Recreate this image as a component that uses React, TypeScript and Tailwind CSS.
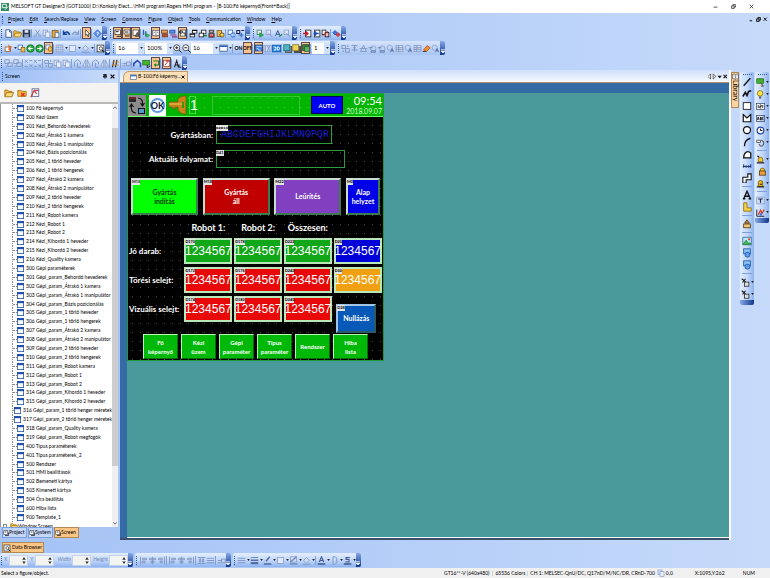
import type { ReactNode } from "react";

const BLUE = "#2563c9";
const GREY = "#8499c2";

const line = (d: string, c = "#1c2430", w = 1.3, fill = "none") => (
  <path d={d} stroke={c} strokeWidth={w} fill={fill} />
);
const box = (x: number, y: number, w: number, h: number, fill: string, stroke = "none") => (
  <rect x={x} y={y} width={w} height={h} fill={fill} stroke={stroke} />
);

const ICONS: Record<string, ReactNode> = {
  new: <>{line("M2.5 1h5l2.500 2.500v7.500h-7.500z", "#3b5d96", 1.200, "#fff")}{line("M7.500 1v3h2.500", "#3b5d96")}</>,
  open: <>{line("M1 10V2.500h3.500l1 1.500h4v1.500", "#a06d10", 1, "#f2c14b")}{line("M1 10.500l2-5h8.500l-2 5z", "#a06d10", 1, "#ffd97a")}</>,
  save: <>{box(1.5, 1.5, 9, 9, "#2c3a52", "#18202e")}{box(3.5, 1.5, 5, 3.5, "#dfe6f2")}{box(3, 7, 6, 4, "#8fa3c4")}</>,
  cut: <>{line("M3 1l5 7M9 1L4 8", GREY)}<circle cx="3" cy="9.500" r="1.500" fill="none" stroke={GREY} /><circle cx="9" cy="9.500" r="1.500" fill="none" stroke={GREY} /></>,
  copy: <>{box(1.5, 1.5, 6, 7, "#dbe6fa", GREY)}{box(4.5, 4, 6, 7, "#e8effc", GREY)}</>,
  paste: <>{box(1.5, 2, 8, 9, "#e2a83a", "#8a6013")}{box(3.5, 1, 4, 2, "#6c7687")}{box(5.5, 5, 5, 6, "#fff", "#45608f")}</>,
  undo: line("M2 2v5h5M2 7c2-4 7-4 8 1", "#17479c", 2),
  redo: line("M10 2v5H5M10 7C8 3 3 3 2 8", GREY, 1.600),
  pointer: line("M4 1v9l2-2 1.500 3.500 1.500-.7L7.500 7.500H10z", "#222", 1, "#fff"),
  help: <>{line("M6 1l5 5-5 5-5-5z", "#2b62c4", 1, "#5e95ee")}{line("M5 4.500h2v2H6v2", "#fff", 1)}</>,
  scrA: <>{box(1.5, 1.5, 8, 7, "#fff", "#222")}{line("M4 11h7V5M3 4h4", "#222", 1.500)}</>,
  scrB: <>{box(1.5, 1.5, 9, 6, "#fff", "#333")}{line("M3 10.500h7M3 4.500h5", "#222", 1.600)}</>,
  scrC: <>{box(1.5, 1.5, 8, 8, "#fff", "#333")}{line("M5 11l3-6 3 6z", "#222", 1, "#777")}</>,
  green: <>{line("M2 1v7M5 3v7", "#2860c0", 1.800)}{line("M4 6l6 2-3 3z", "#1c8f35", 1, "#3fc25a")}</>,
  book: <>{line("M1 2h4l1 1 1-1h4v8H7l-1 1-1-1H1z", "#334", 1, "#fff")}{line("M6 3v8M2.500 5h2M7.500 5h2", "#556", 1)}</>,
  chip: <>{box(2, 1.5, 8, 4, "#e7a15c", "#6f3d16")}{box(3, 6.5, 7, 4, "#c34a32", "#6f3d16")}</>,
  net: <>{box(1, 1.5, 7, 4, "#5b8be8", "#234a96")}{line("M2 8h8M4 10.500h7", "#8c2f6f", 1.400)}</>,
  lang: <>{box(2, 1.5, 8, 9, "#fff", "#333")}{line("M1 3h4v3H1zM6 6h3v4", "#222", 1.300)}</>,
  winA: <>{box(4.5, 1.5, 6, 4, "#fff", "#111")}{box(1.5, 6.5, 6, 4, "#fff", "#111")}{line("M4 2h7M1 7h7", "#111", 1.600)}</>,
  winB: <>{box(4.5, 1.5, 6, 5, "#fff", "#111")}{box(1.5, 5.5, 6, 5, "#fff", "#111")}{line("M8 9h4", "#1e9b3c", 2)}</>,
  data: <>{box(2.5, 1, 7, 4, "#444")}{box(2.5, 6, 7, 5, "#a83236", "#444")}{line("M4 3h4M4 8h4", "#fff", 1)}</>,
  book2: <>{box(1.5, 2, 6, 8, "#e9b852", "#7e5411")}<circle cx="8" cy="8" r="2.800" fill="#ffd24a" stroke="#4a3a15" /></>,
  globe: <>{box(1.5, 1.5, 6, 6, "#fff", BLUE)}<circle cx="8" cy="8" r="3" fill="#79aef2" stroke={BLUE} />{line("M5 8h6", "#fff", 1)}</>,
  findT: <>{line("M1 2h4v4H1zM7 2h4", "#225", 1.400)}{line("M3 8h7M7 5v6", BLUE, 1.400)}</>,
  sim: <>{box(1.5, 1.5, 6, 6, "#e8f4ea", "#3b7550")}{line("M5 5l5 3-5 3z", "#178a37", 1, "#2db455")}</>,
  simG: <>{box(1.5, 1.5, 6, 6, "#dfe8f8", GREY)}{line("M4 5l6 6", GREY)}</>,
  simA: <>{line("M2 9l3-7 3 7M3 7h4", "#34558a", 1.300)}{line("M7 10l4-3", "#1b8a3c", 1.600)}</>,
  plcR: <>{box(3.5, 1.5, 7, 9, "#fff", "#111")}{line("M0 6h7M4 3.500L6.500 6 4 8.500", "#d3202a", 2)}</>,
  plcB: <>{box(3.5, 1.5, 7, 9, "#fff", "#111")}{line("M3 6h6M5.500 3.500L3 6l2.500 2.500", "#1d4fb4", 2)}</>,
  plcV: <>{box(1.5, 1.5, 5, 6, "#fff", "#111")}{box(5.5, 4.5, 5, 6, "#f3b9b9", "#111")}{line("M2 9l7-6", "#d3202a", 1.300)}</>,
  comm: <>{line("M4 2l3 3-3 3-3-3z", "#1d4fb4", 1, "#3d76dc")}{line("M8 5l3 2.500-3 2.500-3-2.500z", "#a91c24", 1, "#e0434b")}</>,
  star: <>{box(1.5, 4, 7, 6, "#fff", "#8b5228")}{line("M6 1l1 2.500 3 .2-2 2 .5 3L6 7.200", "#c9521c", 1, "#f07a2e")}</>,
  edit: <>{box(1.5, 1.5, 6, 6, "#fff", BLUE)}{box(5.5, 4.5, 5, 6, "#f6c14c", "#90600f")}</>,
  back: <><circle cx="6" cy="6" r="5" fill="#22a93b" stroke="#0f6a20" />{line("M9 6H3.500M6 3.500L3.500 6 6 8.500", "#fff", 1.500)}</>,
  fwd: <><circle cx="6" cy="6" r="5" fill="#22a93b" stroke="#0f6a20" />{line("M3 6h5.500M6 3.500L8.500 6 6 8.500", "#fff", 1.500)}</>,
  grid: <>{box(1.5, 1.5, 9, 9, "#d5e1f7", GREY)}{line("M1 4.500h10M1 7.500h10M4.500 1v10M7.500 1v10", GREY, 0.800)}</>,
  rectG: box(2, 2, 8, 8, "#dfe9fb", GREY),
  fillG: <>{line("M2 6l4-4 4 4-4 3z", GREY, 1, "#cfdcf5")}{line("M1 11h10", GREY, 1.500)}</>,
  mag: <>{box(1.5, 1.5, 9, 9, "#fff", "#222")}<circle cx="6.500" cy="6" r="2.200" fill="none" stroke="#222" />{line("M8 8l3 3", "#222", 1.500)}</>,
  zin: <><circle cx="5" cy="5" r="4" fill="#fff" stroke="#222" />{line("M5 3v4M3 5h4M8 8l3.500 3.500", "#222")}</>,
  zout: <><circle cx="5" cy="5" r="4" fill="#fff" stroke="#222" />{line("M3 5h4M8 8l3.500 3.500", "#222")}</>,
  view: <>{box(1, 1.5, 10, 8, "#fff", "#3a4f7a")}{line("M1 3h10", BLUE, 2)}</>,
  dev: <>{box(0.5, 1.5, 11, 9, "#2f7de0", "#123f86")}{line("M2 4h8M2 7h3v2h4", "#d9ebff", 1.200)}</>,
  id: <>{box(1, 2, 10, 8, "#c9dafa", GREY)}{line("M3 3v6M6 3l3 6M9 3L6 9", GREY)}</>,
  d3: <>{box(0.5, 1.5, 11, 9, "#1f86e8", "#0d57a8")}{line("M2 4h3v4H2M7 4h2l1 2-1 2H7z", "#fff", 1.200)}</>,
  layB: <>{box(3.5, 3.5, 8, 8, "#88909c", "#444")}{box(1, 1, 8, 8, "#4fb6c4", "#1d5f76")}</>,
  layY: <>{box(3.5, 3.5, 8, 8, "#555", "#333")}{box(1, 1, 8, 8, "#f0d557", "#85701b")}</>,
  layG: <>{box(1, 1, 9, 9, "#3d8245", "#183f1e")}{box(4, 4, 7, 7, "#57b763", "#1e5327")}</>,
  gA: <>{line("M1 2h5v4H1zM6 6h5v5H6z", GREY)}{line("M3 8v3M9 1v3", GREY)}</>,
  gB: <>{line("M2 2h8M4 5h4M2 8h8M6 2v8", GREY)}</>,
  gC: <>{line("M2 10l4-8 4 8zM1 6h10", GREY)}</>,
  gD: <><circle cx="7" cy="6" r="3.500" fill="none" stroke={GREY} />{line("M1 5h5M4 9h6v2H4z", "#6d84b3")}</>,
  gE: <><circle cx="5" cy="5" r="3.500" fill="none" stroke={GREY} />{line("M6 11l2-5 2 5M7 9h3", "#5d74a6")}</>,
  gF: <>{box(1.5, 2, 9, 8, "#cfdcf5", GREY)}{line("M1 5h10M1 7.500h10M5 2v8", GREY)}</>,
  pal: <>{line("M2 8l5-6 4 3-5 5z", "#b0521c", 1, "#f0902e")}{line("M1 10h5", "#444", 1.400)}</>,
  grpA: <>{line("M1 1h6v5H1zM5 5h6v5H5z", GREY)}{line("M3 9v2", GREY)}</>,
  flip: <>{line("M5 1v10L1 10zM7 1v10l4-1z", GREY, 1, "#cbd9f3")}</>,
  rot: <>{line("M2 10V4l4-3 4 3v3M6 5v6h5", GREY)}</>,
  cross: <>{line("M1 1l4 4M5 1L1 5M7 7l4 4M11 7l-4 4M7 2h4M1 10h4", GREY)}</>,
  hash: <>{line("M4 1L2 11M8 1L6 11", "#222", 1.500)}{line("M1 8h9M2 4h9", "#d8861a", 1.200)}</>,
  pen: <>{line("M1 6h5M1 9h4", GREY)}{line("M6 4h5v5H6z", GREY)}</>,
  arch: line("M1 10V6l5-4 4 4v5", "#2a4fb8", 2.200),
  flag: <>{box(1, 2, 9, 6, "#45b52d", "#1e7011")}{line("M7 8v4l4-3", "#222")}</>,
  loop: <>{line("M2 3h8v6H4M6 7L4 9l2 2", "#178328", 1.800)}</>,
  fx: <>{box(1, 2, 9, 9, "#fff", "#96312c")}{line("M3 9l5-6M4 3h6", "#c4332c", 1.500)}</>,
  meas: line("M2 11l3-9 2 9M3 8h3M8 7v4h3", "#222", 1.400),
  lineD: line("M2 10.500L10 1.500", "#111", 1.600),
  poly: line("M1 9l3-5 2 4 2-5 3-1", "#111", 1.900),
  rect: box(1.5, 2, 9, 8, "#fff", "#111"),
  polyF: line("M1.500 2v8.500h9V2L6 6z", "#111", 1.400, "#fff"),
  circ: <circle cx="6" cy="6" r="4.200" fill="#fff" stroke="#111" strokeWidth="1.500" />,
  arc: line("M3 11C3 6 5 3 10 1.500", "#111", 1.600),
  sector: line("M2 10.500h8.500V5C7 1 2 4 2 10.500z", "#111", 1.500, "#fff"),
  scale: line("M1 6.500h10M2 4v4M5 5v3M8 5v3M10.500 4v4", "#223a70", 1.300),
  pipe: line("M1 5h6V1h4v7H5v4H1z", "#111", 1.300, "#fff"),
  letter: line("M2 10.500L6 1.500l4 9M3.500 7.500h5M1 10.500h3M8 10.500h3", "#111", 1.600),
  logoL: line("M2 1h4v6h5v4H2z", "#8b6d11", 1, "#f5cf46"),
  dxf: <>{box(2, 6, 8, 4.500, "#f2c77a", "#5c3d12")}{line("M6 1l3 4H3z", "#5c3d12", 1, "#c9853a")}</>,
  pict: <>{box(1, 1.5, 10, 9, "#bfe7ff", "#39719c")}{line("M1 10l4-5 3 4 1-1 2 2z", "#258a37", 1, "#46b858")}<circle cx="8.500" cy="4" r="1.300" fill="#e3402f" /></>,
  dbl: <>{box(2, 1, 8, 6, "#8cc3f5", "#1f57a9")}<circle cx="6.500" cy="8" r="3" fill="#5a9dec" stroke="#1f57a9" /></>,
  kitA: <>{line("M1 1l5 4M6 1L2 6", "#222", 1.600)}{box(4.500, 5.500, 6, 5.500, "#ddd", "#222")}</>,
  sw: <>{box(1, 1, 9, 6, "#43b32f", "#1d6d12")}{line("M6 6l4 5-3 0", "#333", 1, "#d59b58")}</>,
  lamp: <><circle cx="5.500" cy="4.500" r="3.700" fill="#ffe443" stroke="#7b6b08" />{box(4, 8.500, 3, 3, "#5d6572")}</>,
  num: <>{box(0.500, 2, 11, 8, "#fff", "#3a4c73")}{line("M3 4v4M5 4h2v2H5v2h2M9 4v4", "#111", 1.100)}</>,
  ascii: <>{box(0.500, 2, 11, 8, "#dbe4f5", "#3a4c73")}{line("M2 8l1-4 1 4M6 4v4h1V4M10 4H9v4h1", "#111", 1.100)}</>,
  clock: <><circle cx="6" cy="6" r="4.500" fill="#fff" stroke="#2543a4" strokeWidth="1.600" />{line("M6 3.500V6h2.500", "#111", 1.300)}</>,
  hist: <>{line("M1 3h5v3H1z", "#555", 1.200, "#fff")}{line("M7 3c5 1 4 8-1 8M4 8l2 3", "#555", 1.400)}</>,
  alarm: <>{line("M3 9V6a3 3 0 016 0v3z", "#7e5b0b", 1, "#f6c733")}{line("M1 10.500h10M2 1l2 2", "#222", 1.700)}</>,
  alarm2: <>{line("M4 6V5a2 2 0 015 0v1", "#7e5b0b", 1, "#f6c733")}{box(3, 6, 7, 5, "#f0a23d", "#553c11")}</>,
  list: <>{line("M3 10V5a3 3 0 016 0v5z", "#6c4d06", 1, "#e9b520")}{line("M1 10.500h10M5 7h3", "#222", 1.500)}</>,
  parts: <>{box(1, 1.500, 10, 9, "#d0def6", "#8398bf")}{line("M3 4h6M6 4v5", "#1b2b55", 1.600)}</>,
  graph: <>{line("M1 2v9h10", "#223", 1.300)}{line("M3 9l3-6 2 4 3-5", "#d43c22", 1.800)}{box(5, 7, 3, 3, "#3772d9")}</>,
  fldDel: <>{line("M1 10V3h4l1 1h5v6z", "#a06d10", 1, "#f4bc4a")}{line("M5 6l4 4M9 6l-4 4", "#e33420", 1.800)}</>,
  prop: <>{box(2.500, 1, 8, 9, "#fff", "#4b5d8c")}{line("M1 11l4-8 3 4M5 3h5", "#c8323a", 1.400)}</>,
  alL: line("M2 1v10M4 3h6v2H4M4 7h4v2H4z", GREY),
  alC: line("M6 1v10M2 3h8v2H2zM4 7h4v2H4z", GREY),
  alR: line("M10 1v10M8 3H2v2h6M8 7H4v2h4", GREY),
  dist: line("M1 2h10M1 10h10M3 4h2v4H3zM7 4h2v4H7z", GREY),
  dots: <>{line("M1 3h10M1 6h10M1 9h10", "#6d84b3", 1)}</>,
  thick: <>{line("M1 2h10", "#546da3", 1)}{line("M1 5.500h10", "#546da3", 2)}{line("M1 9.500h10", "#546da3", 3)}</>,
  brush: <>{line("M4 7l5-6", "#546da3", 2)}{line("M1 10.500h10", "#546da3", 2)}</>,
  hatch: <>{box(2, 1, 8, 7, "#cfdcf5", GREY)}{line("M2 8l8-7M1 10.500h10", "#6d84b3", 1.500)}</>,
  txtA: <>{line("M3 8l3-7 3 7M4 6h4", "#42588c", 1.400)}{line("M1 10.500h10", "#42588c", 2)}</>,
  txtD: line("M4 1h3l2 2v6l-2 2H4M4 1v10", GREY, 1.300),
  txtS: <>{line("M9 2H4v2.500h4V8H3", "#42588c", 1.400)}{line("M1 10.500h10", "#42588c", 2)}</>,
};

function Svg({ n, cls = "size-[10px]" }: { n: string; cls?: string }) {
  return (
    <svg viewBox="0 0 12 12" className={`${cls} shrink-0`} aria-hidden="true">
      {ICONS[n]}
    </svg>
  );
}

function Arrow() {
  return (
    <svg viewBox="0 0 4 3" className="h-[2px] w-[3px] shrink-0" aria-hidden="true">
      <path d="M0 0h4L2 3z" fill="#222" />
    </svg>
  );
}

/* Item syntax: "|" separator, "*name" pressed, "name>" with drop-down arrow, "ON"/"OFF" text keys. */
function Tool({ item }: { item: string }) {
  if (item === "|") return <span className="mr-px h-[9px] w-px shrink-0 bg-[#7f9fd8]" />;
  const on = item.startsWith("*");
  const drop = item.endsWith(">");
  const name = item.replace("*", "").replace(">", "");
  const isText = name === "ON" || name === "OFF";
  return (
    <button
      type="button"
      aria-label={name}
      className={`flex h-[12px] shrink-0 items-center justify-center ${drop ? "w-[13px] gap-px" : "w-[9px]"} ${
        on ? "bg-[#fbc48c] outline -outline-offset-1 outline-[#5a4a52]" : ""
      }`}
    >
      {isText ? <b className="text-[5px] leading-none">{name}</b> : <Svg n={name} cls={on ? "size-[8px]" : "size-[9px]"} />}
      {drop && <Arrow />}
    </button>
  );
}

function Group({ children, light = false }: { children: ReactNode; light?: boolean }) {
  return (
    <div
      role="toolbar"
      className={`flex h-[14px] items-center overflow-hidden rounded-[2px] bg-linear-to-b ${
        light ? "from-[#d6e4fc] to-[#a9c5f3]" : "from-[#e3edff] via-[#c4d9fb] to-[#8fb3ee]"
      }`}
    >
      <span className="ml-px mr-[2px] h-[9px] w-0 shrink-0 border-l border-dotted border-[#35589c]" />
      {children}
      <span className="flex h-full w-[5px] shrink-0 items-end justify-center bg-linear-to-b from-[#86a9e6] to-[#12368c] pb-[2px]">
        <svg viewBox="0 0 4 4" className="size-[4px]" aria-hidden="true">
          <path d="M0 .5h4M0 2l2 2 2-2z" stroke="#fff" strokeWidth=".6" fill="#fff" />
        </svg>
      </span>
    </div>
  );
}

function Tools({ list }: { list: string }) {
  return (
    <>
      {list.split(" ").map((it, i) => (
        <Tool key={i} item={it} />
      ))}
    </>
  );
}

function Combo({ label, value, cls }: { label: string; value: string; cls: string }) {
  return (
    <span className={`relative flex h-[11px] shrink-0 items-center bg-white ${cls}`}>
      <select aria-label={label} defaultValue={value} className="h-full w-full appearance-none bg-transparent pl-[2px] text-[6px] leading-none">
        <option>{value}</option>
      </select>
      <span className="pointer-events-none absolute inset-y-0 right-0 flex w-[6px] items-center justify-center bg-[#cfe0fb]">
        <Arrow />
      </span>
    </span>
  );
}

function Spin({ label, cls }: { label: string; cls: string }) {
  return (
    <label className="flex shrink-0 items-center text-[5px] text-[#6f86b4]">
      <span className={cls}>{label}</span>
      <span className="flex h-[11px] w-[19px] items-center border border-[#c6d2e8] bg-[#f3f3f1]">
        <input aria-label={label} className="h-full w-[12px] bg-transparent" />
        <svg viewBox="0 0 4 8" className="h-[7px] w-[4px]" aria-hidden="true">
          <path d="M0 3l2-3 2 3zM0 5h4L2 8z" fill="#333" />
        </svg>
      </span>
    </label>
  );
}

const MENU = ["Project", "Edit", "Search/Replace", "View", "Screen", "Common", "Figure", "Object", "Tools", "Communication", "Window", "Help"];

const SCREENS = [
  "100 Fő képernyő", "200 Kézi üzem", "201 Kézi_Behordó hevederek", "202 Kézi_Átrakó 1 kamera",
  "203 Kézi_Átrakó 1 manipulátor", "204 Kézi_Bázis pozícionálás", "205 Kézi_1 törlő heveder",
  "206 Kézi_1 törlő hengerek", "207 Kézi_Átrakó 2 kamera", "208 Kézi_Átrakó 2 manipulátor",
  "209 Kézi_2 törlő heveder", "210 Kézi_2 törlő hengerek", "211 Kézi_Robot kamera", "212 Kézi_Robot 1",
  "213 Kézi_Robot 2", "214 Kézi_Kihordó 1 heveder", "215 Kézi_Kihordó 2 heveder", "216 Kézi_Quality kamera",
  "300 Gépi paraméterek", "301 Gépi_param_Behordó hevederek", "302 Gépi_param_Átrakó 1 kamera",
  "303 Gépi_param_Átrakó 1 manipulátor", "304 Gépi_param_Bázis pozícionálás", "305 Gépi_param_1 törlő heveder",
  "306 Gépi_param_1 törlő hengerek", "307 Gépi_param_Átrakó 2 kamera", "308 Gépi_param_Átrakó 2 manipulátor",
  "309 Gépi_param_2 törlő heveder", "310 Gépi_param_2 törlő hengerek", "311 Gépi_param_Robot kamera",
  "312 Gépi_param_Robot 1", "313 Gépi_param_Robot 2", "314 Gépi_param_Kihordó 1 heveder",
  "315 Gépi_param_Kihordó 2 heveder", "316 Gépi_param_1 törlő henger méretek", "317 Gépi_param_2 törlő henger méretek",
  "318 Gépi_param_Quality kamera", "319 Gépi_param_Robot megfogók", "400 Típus paraméterek",
  "401 Típus paraméterek_2", "500 Rendszer", "501 HMI beállítások", "502 Bemeneti kártya", "503 Kimeneti kártya",
  "504 Óra beállítás", "600 Hiba lista", "900 Template_1",
];

function TitleBar() {
  return (
    <header className="flex h-[13px] shrink-0 items-center bg-white pl-px pr-[16px] text-[5px]">
      <svg viewBox="0 0 12 12" className="mr-[2px] size-[8px]" aria-hidden="true">
        <rect width="12" height="12" fill="#2d8a63" />
        <path d="M2 2h6v5H2zM6 10l5-5" stroke="#e8f7ef" strokeWidth="1.500" fill="none" />
      </svg>
      <h1 className="flex-1 whitespace-nowrap">
        MELSOFT GT Designer3 (GOT1000) D:\Konkoly Elect...\HMI program\Rogers HMI program - [B-100:Fő képernyő(Front+Back)]
      </h1>
      <div className="flex gap-[13px]">
        {["M1 5h6", "M1 3h4v4H1zM3 3V1h4v4H5", "M1 1l6 6M7 1L1 7"].map((d, i) => (
          <button key={d} type="button" aria-label={["Minimize", "Restore", "Close"][i]}>
            <svg viewBox="0 0 8 8" className="size-[5px]" aria-hidden="true">
              <path d={d} stroke="#222" strokeWidth="1.200" fill="none" />
            </svg>
          </button>
        ))}
      </div>
    </header>
  );
}

function MenuBar() {
  return (
    <nav className="flex h-[13px] items-center pl-[2px] pr-[2px] text-[5px]">
      <span className="mr-[5px] h-[8px] border-l border-dotted border-[#35589c]" />
      <div className="flex flex-1 gap-[6px]">
        {MENU.map((m) => (
          <button key={m} type="button">
            <span className="underline">{m[0]}</span>
            {m.slice(1)}
          </button>
        ))}
      </div>
      <div className="flex gap-[2px]">
        {["M1 6h4", "M1 3h4v4H1zM3 3V1h4v4H5", "M1 1l5 5M6 1L1 6"].map((d, i) => (
          <button key={d} type="button" aria-label={["Minimize document", "Restore document", "Close document"][i]}>
            <svg viewBox="0 0 8 8" className="size-[5px]" aria-hidden="true">
              <path d={d} stroke="#111" strokeWidth="1.600" fill="none" />
            </svg>
          </button>
        ))}
      </div>
    </nav>
  );
}

function ScreenPane() {
  return (
    <aside className="flex w-[118px] shrink-0 flex-col bg-white">
      <div className="flex h-[13px] shrink-0 items-center bg-linear-to-r from-[#9cbdf5] to-[#c9dcfb] pl-[2px] pr-[3px] text-[5px]">
        <span className="mr-[2px] h-[9px] border-l border-dotted border-[#35589c]" />
        <h2 className="flex-1">Screen</h2>
        <button type="button" aria-label="Pin" className="mr-[3px]">
          <svg viewBox="0 0 6 8" className="h-[5px] w-[4px]" aria-hidden="true"><path d="M1 0h4v4h1v1H0V4h1zM3 5v3" stroke="#111" fill="#333" /></svg>
        </button>
        <button type="button" aria-label="Close pane">
          <svg viewBox="0 0 8 8" className="size-[5px]" aria-hidden="true"><path d="M1 1l6 6M7 1L1 7" stroke="#111" strokeWidth="2" /></svg>
        </button>
      </div>
      <div className="flex h-[21px] shrink-0 items-center gap-[3px] border-b-2 border-[#b8b8b8] bg-[#f4f3f1] pl-[4px]">
        {["open", "fldDel", "prop"].map((n) => (
          <button key={n} type="button" aria-label={n}><Svg n={n} /></button>
        ))}
      </div>
      <div className="flex min-h-0 flex-1 overflow-hidden border-l border-[#9a9a9a]">
        <ul className="-mb-[4px] flex min-w-0 flex-1 flex-col text-[5px] leading-none">
          {SCREENS.map((s) => (
            <li key={s} className="ml-[11px] flex min-h-0 flex-1 items-center whitespace-nowrap border-l border-dotted border-[#888]">
              <span className="w-[4px] border-t border-dotted border-[#888]" />
              <svg viewBox="0 0 12 12" className="mr-[2px] size-[7px] shrink-0" aria-hidden="true">
                <rect x=".7" y=".7" width="10.600" height="10.600" fill="#fff" stroke="#2a5ba8" strokeWidth="1.400" />
                <path d="M0 2h12" stroke="#1c4fae" strokeWidth="3.500" />
              </svg>
              <span>{s}</span>
            </li>
          ))}
          <li className="flex min-h-0 flex-1 items-center whitespace-nowrap pl-[2px]">
            <span className="mr-[3px] size-[4px] border border-[#888]" />
            <Svg n="open" cls="size-[8px]" />
            Window Screen
          </li>
        </ul>
        <div className="flex w-[6px] shrink-0 flex-col items-center justify-between bg-[#f0f0f0] py-[2px]">
          <svg viewBox="0 0 6 4" className="h-[3px] w-[4px]" aria-hidden="true"><path d="M0 4l3-3 3 3" stroke="#333" fill="none" /></svg>
          <span className="mb-[56px] mt-[19px] w-full flex-1 bg-[#cdcdcd]" />
          <svg viewBox="0 0 6 4" className="h-[3px] w-[4px]" aria-hidden="true"><path d="M0 0l3 3 3-3" stroke="#333" fill="none" /></svg>
        </div>
      </div>
      <div className="flex h-[13px] shrink-0 gap-px bg-[#a9c5f4] pl-[2px] text-[5px]">
        {["Project", "System", "Screen"].map((t) => (
          <button
            key={t}
            type="button"
            className={`flex h-[11px] w-[25px] items-center border ${t === "Screen" ? "border-[#b08a55] bg-[#fdc583]" : "border-[#7f9fd8] bg-[#c3d7f8]"}`}
          >
            <Svg n="scrA" cls="size-[6px]" />
            {t}
          </button>
        ))}
      </div>
    </aside>
  );
}

function Tag({ children }: { children: string }) {
  return (
    <span className="absolute -left-px -top-px bg-[#e4e4e4] text-[4px] font-bold leading-[6px] text-black">{children}</span>
  );
}

const COUNTS: { label: string; cells: [string, string][] }[] = [
  { label: "Jó darab:", cells: [["D170", "bg-[#10a818]"], ["D178", "bg-[#10a818]"], ["D222", "bg-[#10a818]"], ["D26", "bg-[#0000d8]"]] },
  { label: "Törési selejt:", cells: [["D172", "bg-[#e80808]"], ["D176", "bg-[#e80808]"], ["D242", "bg-[#e80808]"], ["D30", "bg-[#f0a010]"]] },
  { label: "Vizuális selejt:", cells: [["D174", "bg-[#e80808]"], ["D180", "bg-[#e80808]"], ["D245", "bg-[#e80808]"]] },
];

const COMMANDS: [string, string, string][] = [
  ["Gyártás\nindítás", "M15", "w-[67px] bg-[#00ff00] text-[#063806]"],
  ["Gyártás\náll", "M18", "w-[67px] bg-[#c00000] text-white"],
  ["Leűrítés", "M22", "w-[67px] bg-[#8040c0] text-white"],
  ["Alap\nhelyzet", "M0", "w-[34px] bg-[#0000e8] text-white"],
];

const PAGES = ["Fő\nképernyő", "Kézi\nüzem", "Gépi\nparaméter", "Típus\nparaméter", "Rendszer", "Hiba\nlista"];

function HmiScreen() {
  return (
    <section className="w-[257px] border border-[#1c9a3c] bg-black bg-[radial-gradient(circle_at_4.5px_4.5px,#4c4c4c_0.6px,transparent_0.7px)] bg-[length:8px_9px] text-white">
      <div className="flex h-[23px] items-center border-b border-[#6dff6d] bg-[#00b400] bg-[radial-gradient(circle_at_4.5px_4.5px,#3ccc3c_0.6px,transparent_0.7px)] bg-[length:8px_9px] pr-px">
        <svg viewBox="0 0 18 21" className="h-[21px] w-[18px]" aria-hidden="true">
          <rect width="18" height="21" fill="#8c8c8c" />
          <rect x="1" y="2" width="7" height="5" fill="#2b2b2b" />
          <path d="M1 3h7" stroke="#b22" />
          <rect x="10.500" y="13.500" width="6" height="5" fill="#4f9ad0" stroke="#111" />
          <path d="M10 3c4 0 5 4 4.500 7M12.500 8l2 3 2-3M8 18c-5 0-5-5-4.500-8M1.500 12l2-3 2 3" stroke="#111" fill="none" strokeWidth="1.200" />
        </svg>
        <div className="ml-[3px] flex h-[21px] w-[17px] items-center justify-center bg-white">
          <span className="flex size-[15px] items-center justify-center rounded-full border-2 border-[#5a9be0] text-[9px] font-bold leading-none text-[#101a3c]">OK</span>
        </div>
        <svg viewBox="0 0 18 20" className="ml-[3px] h-[20px] w-[18px]" aria-hidden="true">
          <path d="M0 7h9V4c3-3 5-3 8-3v18c-3 0-5 0-8-4v-3H6v2H4v-2H0z" fill="#c8861a" stroke="#7a4f0b" strokeWidth=".7" />
          <path d="M0 9h14" stroke="#f0bd5a" />
          <path d="M14 7v6" stroke="#00a000" strokeWidth="1.500" />
        </svg>
        <span className="ml-[2px] w-[7px] border border-[#3edc3e] text-center font-['Liberation_Sans',sans-serif] text-[14px] leading-[16px]">1</span>
        <span className="ml-[16px] h-[19px] w-[88px] border border-[#36c636]" />
        <button type="button" className="ml-[11px] h-[18px] w-[32px] border border-[#000060] bg-[#0000f0] text-[6px] font-bold">AUTO</button>
        <div className="flex-1 text-right">
          <div className="text-[11px] leading-[12px]">09:54</div>
          <div className="text-[7px] leading-[8px] text-[#d9ffd9]">2018.09.07</div>
        </div>
      </div>

      <div className="grid grid-cols-[85px_1fr] items-center gap-x-[3px] gap-y-[6px] pt-[8px] text-[8px] font-bold">
        <span className="whitespace-nowrap text-right">Gyártásban:</span>
        <div className="relative flex h-[19px] w-[116px] items-center border border-[#2e9a3a] font-['Liberation_Mono',monospace] text-[10px] font-normal leading-none text-[#1c1cd0]">
          <span className="pl-[4px]">ABCDEFGHIJKLMNOPQR</span>
          <Tag>D2013</Tag>
        </div>
        <span className="whitespace-nowrap text-right">Aktuális folyamat:</span>
        <div className="relative h-[18px] w-[129px] border border-[#2e9a3a]"><Tag>D41</Tag></div>
      </div>

      <div className="flex justify-between pl-[3px] pr-[3px] pt-[10px]">
        {COMMANDS.map(([t, tag, cls]) => (
          <button
            key={t}
            type="button"
            className={`relative h-[37px] whitespace-pre-line border-2 border-b-[#3c7a50] border-l-[#c8dcd0] border-r-[#3c7a50] border-t-[#c8dcd0] text-[7px] font-bold leading-[9px] ${cls}`}
          >
            {t}
            <Tag>{tag}</Tag>
          </button>
        ))}
      </div>

      <table className="mt-[3px] w-full table-fixed border-separate border-spacing-x-[1px] border-spacing-y-[1px]">
        <thead>
          <tr className="text-[9px] leading-[17px]">
            <td className="w-[54px]" />
            {["Robot 1:", "Robot 2:", "Összesen:"].map((h) => (
              <th key={h} scope="col" className="whitespace-nowrap p-0 font-bold">{h}</th>
            ))}
            <td />
          </tr>
        </thead>
        <tbody>
          {COUNTS.map((row) => (
            <tr key={row.label} className="h-[28px]">
              <th scope="row" className="whitespace-nowrap p-0 text-left text-[8px] font-bold">{row.label}</th>
              {row.cells.map(([tag, cls]) => (
                <td key={tag} className="p-0 align-middle">
                  <div className={`relative mx-auto flex h-[26px] w-[48px] items-center justify-center border-2 border-[#b8e8b8] font-['Liberation_Sans',sans-serif] text-[12px] leading-none ${cls}`}>
                    1234567
                    <Tag>{tag}</Tag>
                  </div>
                </td>
              ))}
              {row.cells.length < 4 && (
                <td className="p-0 align-top">
                  <div className="h-[26px] pl-[3px] pt-[8px]">
                    <button type="button" className="relative h-[29px] w-[40px] border-2 border-b-[#2c5a60] border-l-[#9fc4e8] border-r-[#2c5a60] border-t-[#9fc4e8] bg-[#0858b8] text-[7px] font-bold">
                      Nullázás
                      <Tag>D28</Tag>
                    </button>
                  </div>
                </td>
              )}
            </tr>
          ))}
        </tbody>
      </table>

      <div className="mb-px mt-[10px] flex gap-[3px] pl-[15px]">
        {PAGES.map((p) => (
          <button
            key={p}
            type="button"
            className="h-[25px] w-[35px] whitespace-pre-line border border-b-[#0b6a0b] border-l-[#b6f5b6] border-r-[#0b6a0b] border-t-[#b6f5b6] bg-[#00b808] text-[6px] font-bold leading-[9px]"
          >
            {p}
          </button>
        ))}
      </div>
    </section>
  );
}

function Editor() {
  return (
    <main className="ml-[2px] flex min-w-0 flex-1 flex-col border-r-2 border-white">
      <div className="flex h-[13px] shrink-0 items-end border-b border-[#b89060] bg-linear-to-b from-[#cfdffa] to-[#f6f9ff] pl-[3px] pr-[2px] text-[5px]">
        <div className="flex h-[11px] w-[65px] items-center rounded-tl-[6px] border border-b-0 border-[#c09a68] bg-[#fde0b8] pl-[6px]">
          <Svg n="view" cls="size-[7px] mr-px" />
          <span className="flex-1 whitespace-nowrap">B-100:Fő képerny...</span>
          <button type="button" aria-label="Close tab" className="mr-[2px]">
            <svg viewBox="0 0 8 8" className="size-[4px]" aria-hidden="true"><path d="M1 1l6 6M7 1L1 7" stroke="#111" strokeWidth="2" /></svg>
          </button>
        </div>
        <div className="flex h-full flex-1 items-center justify-end">
          <svg viewBox="0 0 22 8" className="h-[7px] w-[19px]" aria-hidden="true">
            <path d="M3 1v6L0 4zM6 1v6l3-3z" fill="#fff" stroke="#333" strokeWidth=".8" />
            <path d="M11 3h5l-2.500 3z" fill="#111" />
            <path d="M18 2l4 4M22 2l-4 4" stroke="#111" strokeWidth="1.300" />
          </svg>
        </div>
      </div>
      <div className="flex min-h-0 flex-1 flex-col border-b-2 border-[#3f4f6b] bg-[#356ba5] pl-[7px] pt-[10px]">
        <div className="min-h-0 flex-1 border-b border-white bg-[#4a9a9b]">
          <HmiScreen />
        </div>
      </div>
    </main>
  );
}

function SideBarGroup({ list }: { list: string }) {
  return (
    <div role="toolbar" className="flex w-[14px] flex-col items-center overflow-hidden rounded-[2px] bg-linear-to-r from-[#e3edff] via-[#c4d9fb] to-[#8fb3ee]">
      <span className="mb-px mt-[2px] w-[9px] border-t border-dotted border-[#35589c]" />
      {list.split(" ").map((it, i) =>
        it === "|" ? (
          <span key={i} className="my-[2px] h-px w-[10px] bg-[#7f9fd8]" />
        ) : (
          <button key={i} type="button" aria-label={it.replace(">", "")} className="flex h-[12px] w-full items-center justify-center gap-px">
            <Svg n={it.replace(">", "")} cls={it.endsWith(">") ? "size-[9px]" : "size-[10px]"} />
            {it.endsWith(">") && <Arrow />}
          </button>
        ),
      )}
      <span className="h-[5px] w-full bg-linear-to-r from-[#86a9e6] to-[#12368c]" />
    </div>
  );
}

export default function App() {
  return (
    <div className="flex h-screen flex-col overflow-hidden bg-linear-to-r from-[#a3c2f6] to-[#c6dafa] font-['Lato','Liberation_Sans',sans-serif] text-black">
      <TitleBar />
      <MenuBar />
      <div className="flex h-[44px] shrink-0 flex-col gap-px">
        <div className="flex gap-[2px]">
          <Group><Tools list="new open save | cut copy paste | undo redo | *pointer | help" /></Group>
          <Group><Tools list="*scrA *scrB *scrC | green *book chip net *lang | winA winB data book2 | globe findT" /></Group>
          <Group><Tools list="sim simG simA simG" /></Group>
          <Group><Tools list="plcR plcB plcV | comm" /></Group>
        </div>
        <div className="flex gap-[2px]">
          <Group><Tools list="star> edit back fwd *edit | grid> rectG> fillG> | mag" /></Group>
          <Group>
            <Combo label="Grid X" value="16" cls="w-[28px]" />
            <Combo label="Zoom" value="100%" cls="w-[28px] ml-px" />
            <Tools list="zin zout" />
            <Combo label="Grid Y" value="16" cls="w-[28px]" />
            <Tools list="view> | ON *OFF | *dev id d3 | layB layY *layG |" />
            <Combo label="Layer" value="1" cls="w-[18px]" />
          </Group>
          <Group light><Tools list="gA gB gC gD gD gE gF gE gF pal gE" /></Group>
        </div>
        <div className="flex">
          <Group><Tools list="grpA grpA | cross cross | gA copy copy | rot flip rot flip | hash | pen | arch flag *loop | *fx | meas" /></Group>
        </div>
      </div>

      <div className="flex min-h-0 flex-1">
        <ScreenPane />
        <Editor />
        <div className="flex shrink-0 items-start gap-px pr-px pt-[2px]">
          <button type="button" className="flex h-[36px] w-[8px] flex-col items-center border border-[#b08a55] bg-[#fdd3a2] text-[7px] leading-none">
            <Svg n="book" cls="size-[7px]" />
            <span className="[writing-mode:vertical-rl]">Library</span>
          </button>
          <SideBarGroup list="lineD poly rect polyF circ arc sector scale pipe | letter logoL | dxf | pict dbl dbl | kitA> kitA>" />
          <SideBarGroup list="sw> lamp> num> ascii> clock> hist> | alarm> alarm2 list> | parts> graph>" />
        </div>
      </div>

      <div className="flex h-[13px] shrink-0 items-end pl-[2px]">
        <button type="button" className="flex h-[11px] items-center gap-px border border-[#b08a55] bg-[#fdc583] pr-px text-[5px]">
          <Svg n="mag" cls="size-[8px]" />
          Data Browser
        </button>
      </div>
      <div className="flex h-[15px] shrink-0 gap-[2px]">
        <Group>
          <Spin label="X" cls="pr-[2px]" />
          <Spin label="Y" cls="pl-[2px] pr-[2px]" />
          <Spin label="Width" cls="pl-[3px] pr-px" />
          <Spin label="Height" cls="pl-[2px] pr-px" />
        </Group>
        <Group><Tools list="alL alC alR | alL alC alR | dist dots | pen" /></Group>
        <Group><Tools list="dots> thick> brush> rectG> hatch> fillG> | txtA> txtD> txtS>" /></Group>
      </div>
      <footer className="flex h-[10px] shrink-0 items-center bg-[#f0f0f0] pl-px pr-[15px] text-[5px] leading-none">
        <span className="flex-1">Select a figure/object.</span>
        <span className="pr-[3px]">GT16**-V (640x480)</span>
        <span className="border-l border-[#d5d5d5] px-[2px]">65536 Colors</span>
        <span className="border-l border-[#d5d5d5] px-[2px]">CH 1: MELSEC-QnU/DC, Q17nD/M/NC/DR, CRnD-700</span>
        <Svg n="copy" cls="size-[8px]" />
        <span className="w-[30px] pl-px">0,0</span>
        <span className="w-[48px]">X:1095,Y:262</span>
        <span>NUM</span>
      </footer>
    </div>
  );
}
